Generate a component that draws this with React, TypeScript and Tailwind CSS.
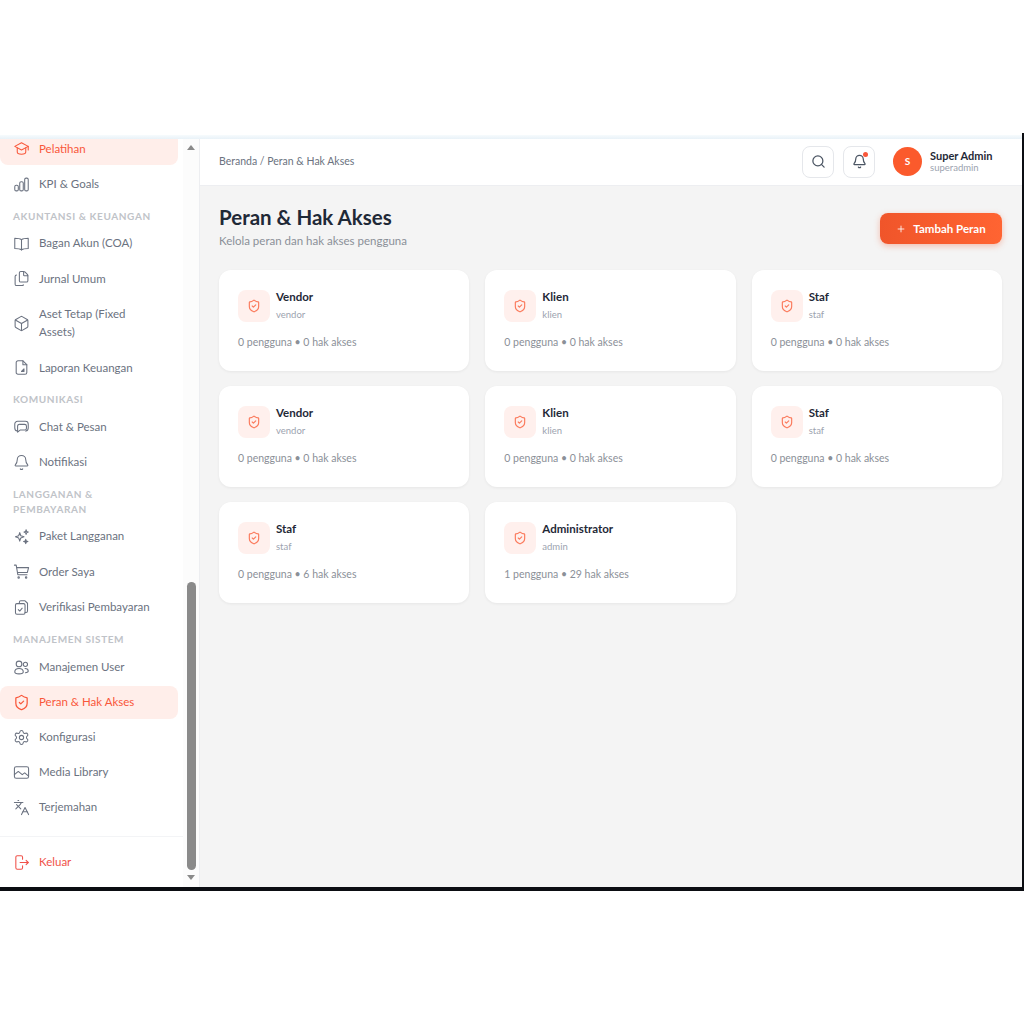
import { Bell, Box, Files, Languages, Plus, Search, Settings, ShieldCheck } from "lucide-react";
import type { ReactNode } from "react";

function Svg({ children }: { children: ReactNode }) {
  return (
    <svg viewBox="0 0 24 24" fill="none" stroke="currentColor" strokeWidth={1.5} strokeLinecap="round" strokeLinejoin="round" className="h-[17px] w-[17px] shrink-0">
      {children}
    </svg>
  );
}

const lucide = "h-[17px] w-[17px] shrink-0";

const CapIcon = () => (
  <Svg>
    <path d="M12 4 2.5 9l9.5 5 9.5-5z" />
    <path d="M6 11v6c0 1.6 3 3 6 3s6-1.4 6-3v-6" />
    <path d="M21.5 9v5" />
  </Svg>
);
const ChartIcon = () => (
  <Svg>
    <rect x="2.5" y="13" width="5" height="8" rx="2" />
    <rect x="9.5" y="8" width="5" height="13" rx="2" />
    <rect x="16.5" y="3" width="5" height="18" rx="2" />
  </Svg>
);
const BookIcon = () => (
  <Svg>
    <path d="M12 6.5C10 5 6 4.5 2.5 4.5v14.5c3.500 0 7.500.5 9.500 2 2-1.500 6-2 9.500-2V4.500C18 4.500 14 5 12 6.500z" />
    <path d="M12 6.500V21" />
  </Svg>
);
const ReportIcon = () => (
  <Svg>
    <path d="M14 2.500H7a2.500 2.500 0 0 0-2.500 2.500v14A2.500 2.500 0 0 0 7 21.500h10a2.500 2.500 0 0 0 2.500-2.500V8z" />
    <path d="M14 2.500V8h5.500" />
    <path d="M15.500 14v3.500H12z" fill="currentColor" />
  </Svg>
);
const ChatIcon = () => (
  <Svg>
    <path d="M6 18.500C3.800 18 2.500 16.500 2.500 14V8.500a4 4 0 0 1 4-4h11a4 4 0 0 1 4 4V14c0 2.500-1.300 4-3.500 4.500" />
    <path d="M9.500 9h7a2.500 2.500 0 0 1 2.500 2.500v3a2.500 2.500 0 0 1-2.500 2.500H10l-3.500 3v-8.500A2.500 2.500 0 0 1 9.500 9z" />
  </Svg>
);
const SparkIcon = () => (
  <Svg>
    <path d="M9.500 6.500 11 11l4.500 1.500L11 14l-1.500 4.500L8 14l-4.500-1.500L8 11z" />
    <path d="M18.500 2.500 19.300 5l2.200.8-2.200.8-.8 2.400-.8-2.400-2.200-.8 2.200-.8z" />
    <path d="M18 16l.8 2.200 2.200.8-2.200.8L18 22l-.8-2.200-2.200-.8 2.200-.8z" fill="currentColor" />
  </Svg>
);
const CartIcon = () => (
  <Svg>
    <path d="M2 3h2.500l2.300 13.500h13" />
    <path d="M5.200 6.500H22l-1.800 7H6.400" />
    <circle cx="8" cy="20.500" r="1" />
    <circle cx="18.500" cy="20.500" r="1" />
  </Svg>
);
const VerifyIcon = () => (
  <Svg>
    <path d="M9 6V4.500a2 2 0 0 1 2-2h6l3.500 3.500v11a2 2 0 0 1-2 2H17" />
    <rect x="3.500" y="6.500" width="13.500" height="15" rx="2" />
    <path d="m7.500 15 2 2 3.500-4" />
  </Svg>
);
const UsersIcon = () => (
  <Svg>
    <circle cx="8.500" cy="7" r="4" />
    <circle cx="17.500" cy="7.500" r="3" />
    <path d="M2.500 18.500c0-3 2.700-5 6-5s6 2 6 5c0 1.500-1.500 2.500-6 2.500s-6-1-6-2.500z" />
    <path d="M17 13.500c2.500 0 4.500 1.500 4.500 3.500 0 1.500-1.200 2.200-4 2.300" />
  </Svg>
);
const ImageIcon = () => (
  <Svg>
    <rect x="2" y="4" width="20" height="16" rx="2.500" />
    <path d="m2 15 5.500-4.500L13 15l3.500-2.500L22 17" />
  </Svg>
);
const LogoutIcon = () => (
  <Svg>
    <path d="M13.500 7.500V4.500a2 2 0 0 0-2-2H6a2 2 0 0 0-2 2v15a2 2 0 0 0 2 2h5.500a2 2 0 0 0 2-2v-3" />
    <path d="M10 12h11.500" />
    <path d="m18.500 9 3 3-3 3" />
  </Svg>
);

type NavItem = { label: string; icon: ReactNode; active?: boolean; tall?: boolean };

const sections: { title?: string; last?: boolean; items: NavItem[] }[] = [
  {
    items: [
      { label: "Pelatihan", icon: <CapIcon />, active: true },
      { label: "KPI & Goals", icon: <ChartIcon /> },
    ],
  },
  {
    title: "AKUNTANSI & KEUANGAN",
    items: [
      { label: "Bagan Akun (COA)", icon: <BookIcon /> },
      { label: "Jurnal Umum", icon: <Files className={lucide} strokeWidth={1.5} /> },
      { label: "Aset Tetap (Fixed Assets)", icon: <Box className={lucide} strokeWidth={1.5} />, tall: true },
      { label: "Laporan Keuangan", icon: <ReportIcon /> },
    ],
  },
  {
    title: "KOMUNIKASI",
    items: [
      { label: "Chat & Pesan", icon: <ChatIcon /> },
      { label: "Notifikasi", icon: <Bell className={lucide} strokeWidth={1.5} /> },
    ],
  },
  {
    title: "LANGGANAN & PEMBAYARAN",
    items: [
      { label: "Paket Langganan", icon: <SparkIcon /> },
      { label: "Order Saya", icon: <CartIcon /> },
      { label: "Verifikasi Pembayaran", icon: <VerifyIcon /> },
    ],
  },
  {
    title: "MANAJEMEN SISTEM",
    last: true,
    items: [
      { label: "Manajemen User", icon: <UsersIcon /> },
      { label: "Peran & Hak Akses", icon: <ShieldCheck className={lucide} strokeWidth={1.75} />, active: true },
      { label: "Konfigurasi", icon: <Settings className={lucide} strokeWidth={1.5} /> },
      { label: "Media Library", icon: <ImageIcon /> },
      { label: "Terjemahan", icon: <Languages className={lucide} strokeWidth={1.5} /> },
    ],
  },
];

const roles = [
  { name: "Vendor", slug: "vendor", stat: "0 pengguna • 0 hak akses" },
  { name: "Klien", slug: "klien", stat: "0 pengguna • 0 hak akses" },
  { name: "Staf", slug: "staf", stat: "0 pengguna • 0 hak akses" },
  { name: "Vendor", slug: "vendor", stat: "0 pengguna • 0 hak akses" },
  { name: "Klien", slug: "klien", stat: "0 pengguna • 0 hak akses" },
  { name: "Staf", slug: "staf", stat: "0 pengguna • 0 hak akses" },
  { name: "Staf", slug: "staf", stat: "0 pengguna • 6 hak akses" },
  { name: "Administrator", slug: "admin", stat: "1 pengguna • 29 hak akses" },
];

function Sidebar() {
  return (
    <aside className="flex w-[200px] shrink-0 border-r border-gray-200/70 bg-white">
      <div className="flex min-w-0 flex-1 flex-col">
        <nav className="min-h-0 flex-1 overflow-hidden pr-[5px]">
          <div className="-mt-[7px]">
            {sections.map((s, i) => (
              <div key={i}>
                {s.title && (
                  <div className="pl-[13px] pr-4 pb-[3px] pt-[8px] text-[10px] font-bold leading-[15px] tracking-[0.06em] text-[#c0c3c8]">{s.title}</div>
                )}
                <div className={`flex flex-col ${s.last ? "mt-[1px] gap-[2px]" : "gap-[2.5px]"}`}>
                  {s.items.map((item) => (
                    <div
                      key={item.label}
                      className={`flex items-center gap-[9.5px] rounded-lg pl-[12.5px] pr-4 text-[11.5px] leading-[18px] ${item.tall ? "h-[51px]" : "h-[33px]"} ${item.active ? "bg-[#ffeeea] text-[#f9573a]" : "text-[#6b7280]"}`}
                    >
                      {item.icon}
                      <span>{item.label}</span>
                    </div>
                  ))}
                </div>
              </div>
            ))}
          </div>
        </nav>
        <div className="flex h-[51px] shrink-0 items-center gap-[9.5px] border-t border-gray-100 pl-[12.5px] text-[11.5px] text-[#f0524a]">
          <LogoutIcon />
          <span>Keluar</span>
        </div>
      </div>
      <div className="flex w-[16px] shrink-0 flex-col items-center bg-[#fcfcfc]">
        <div className="mt-[6px] h-0 w-0 border-x-[4px] border-b-[5px] border-x-transparent border-b-[#8a8a8a]" />
        <div className="mt-auto mb-[5px] h-[288px] w-[9px] rounded-full bg-[#8a8a8a]" />
        <div className="mb-[7px] h-0 w-0 border-x-[4px] border-t-[5px] border-x-transparent border-t-[#8a8a8a]" />
      </div>
    </aside>
  );
}

function Header() {
  return (
    <header className="flex h-[47px] shrink-0 items-center justify-between border-b border-gray-200/70 bg-white pb-[1px] pl-[19px] pr-[29px]">
      <div className="text-[10.5px] text-[#6b7280]">Beranda / Peran &amp; Hak Akses</div>
      <div className="flex items-center">
        <div className="flex h-[32px] w-[32px] items-center justify-center rounded-lg border border-gray-200">
          <Search className="h-[15px] w-[15px] text-[#4b5563]" />
        </div>
        <div className="relative ml-[9px] flex h-[32px] w-[32px] items-center justify-center rounded-lg border border-gray-200">
          <Bell className="h-[15px] w-[15px] text-[#4b5563]" />
          <span className="absolute right-[6px] top-[5px] h-[5px] w-[5px] rounded-full bg-[#f9573a]" />
        </div>
        <div className="ml-[18px] flex h-[29px] w-[29px] items-center justify-center rounded-full bg-[#fb5a2c] text-[10px] font-bold text-white">S</div>
        <div className="ml-[8px]">
          <div className="text-[11px] font-bold leading-[13px] text-[#1f2937]">Super Admin</div>
          <div className="text-[9.5px] leading-[12px] text-[#9ca3af]">superadmin</div>
        </div>
      </div>
    </header>
  );
}

function RoleCard({ name, slug, stat }: { name: string; slug: string; stat: string }) {
  return (
    <div className="h-[100.5px] rounded-xl bg-white px-[19px] pt-[20px] shadow-[0_1px_3px_rgba(0,0,0,0.06)]">
      <div className="flex items-start gap-[6px]">
        <div className="flex h-[32px] w-[32px] items-center justify-center rounded-lg bg-[#fff0ed]">
          <ShieldCheck className="h-[14px] w-[14px] text-[#fb7a5c]" />
        </div>
        <div className="-mt-px">
          <div className="text-[11.5px] font-bold leading-[15px] text-[#1f2937]">{name}</div>
          <div className="mt-[4px] text-[9.5px] leading-[14px] text-[#9ca3af]">{slug}</div>
        </div>
      </div>
      <div className="mt-[13px] text-[10.5px] leading-[14px] text-[#8b9098]">{stat}</div>
    </div>
  );
}

export default function App() {
  return (
    <div className="h-[1024px] w-[1024px] overflow-hidden bg-white pt-[133px] font-['Lato',sans-serif]">
      <div className="flex h-[758px] w-[1024px]">
        <div className="flex min-w-0 flex-1 flex-col pt-[2px]">
          <div className="h-[4px] shrink-0 bg-gradient-to-b from-[#f7fbfd] to-[#e9f2f8]" />
          <div className="flex min-h-0 flex-1">
            <Sidebar />
            <main className="flex min-w-0 flex-1 flex-col bg-[#f4f4f4]">
              <Header />
              <div className="pl-[19px] pr-[19.5px] pt-[19px]">
                <div className="flex items-start justify-between">
                  <div>
                    <h1 className="text-[20.5px] font-bold leading-[24px] text-[#1f2937]">Peran &amp; Hak Akses</h1>
                    <p className="mt-[4px] text-[11.5px] leading-[16px] text-[#8b9098]">Kelola peran dan hak akses pengguna</p>
                  </div>
                  <button className="mt-[8px] flex h-[31px] w-[122px] items-center justify-center gap-[7px] rounded-lg bg-gradient-to-r from-[#f0552a] to-[#ff6432] text-[11.5px] font-bold text-white shadow-[0_2px_6px_rgba(240,85,42,0.35)]">
                    <Plus className="h-[10px] w-[10px]" />
                    Tambah Peran
                  </button>
                </div>
                <div className="mt-[21px] grid grid-cols-3 gap-x-[16px] gap-y-[15.5px]">
                  {roles.map((r, i) => (
                    <RoleCard key={i} {...r} />
                  ))}
                </div>
              </div>
            </main>
          </div>
          <div className="h-[4px] shrink-0 bg-[#0b0d12]" />
        </div>
        <div className="w-[2.5px] shrink-0 bg-[#0b0d12]" />
      </div>
    </div>
  );
}
